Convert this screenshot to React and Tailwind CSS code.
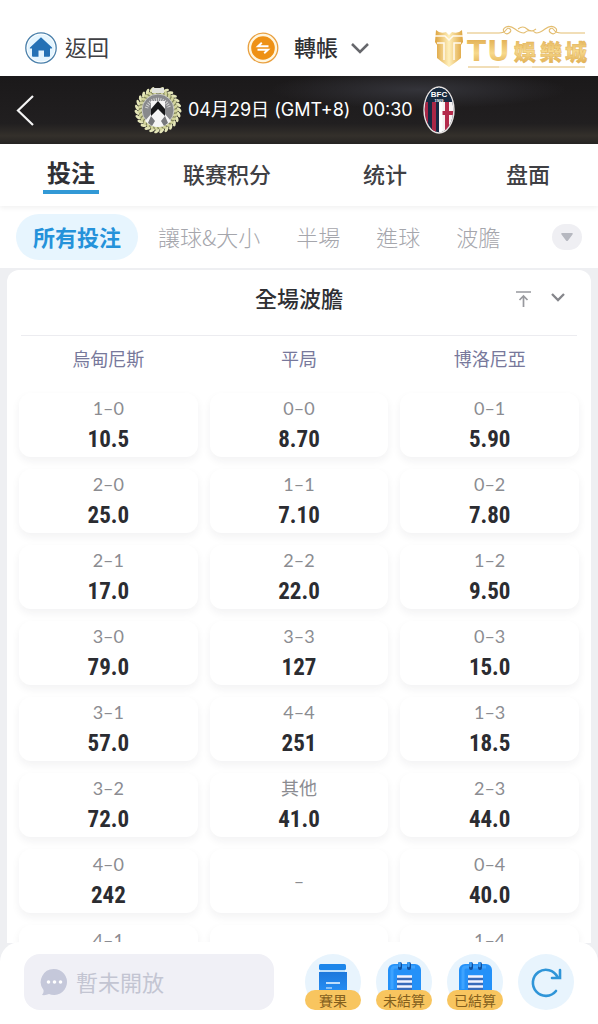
import React from "react";

const rows = [
  [["1–0", "10.5"], ["0–0", "8.70"], ["0–1", "5.90"]],
  [["2–0", "25.0"], ["1–1", "7.10"], ["0–2", "7.80"]],
  [["2–1", "17.0"], ["2–2", "22.0"], ["1–2", "9.50"]],
  [["3–0", "79.0"], ["3–3", "127"], ["0–3", "15.0"]],
  [["3–1", "57.0"], ["4–4", "251"], ["1–3", "18.5"]],
  [["3–2", "72.0"], ["其他", "41.0"], ["2–3", "44.0"]],
  [["4–0", "242"], ["–", ""], ["0–4", "40.0"]],
  [["4–1", "150"], null, ["1–4", "95.0"]],
];

function HomeIcon() {
  return (
    <svg className="size-8" viewBox="0 0 32 32" aria-hidden="true">
      <circle cx="16" cy="16" r="15.2" fill="#fff" stroke="#4a80ab" strokeWidth="1.3" />
      <circle cx="16" cy="16" r="13.6" fill="#e4f5ff" />
      <path d="M16 5.2 27 15.4q.6 1-.5 1.1H25v7.3q0 1-1 1h-5v-6.3h-5.5v6.3H8q-1 0-1-1v-7.3H5.3q-1-.2-.3-1.1z" fill="#2571b5" />
    </svg>
  );
}

function TransferIcon() {
  return (
    <svg className="size-8" viewBox="0 0 32 32" aria-hidden="true">
      <circle cx="16" cy="16" r="14.8" fill="#fff6df" stroke="#e9a040" strokeWidth="1.3" />
      <circle cx="16" cy="16" r="11.8" fill="#ee9115" />
      <path d="M21.500 14.300H11l3.800-3.500M10.500 17.800H21l-3.800 3.500" fill="none" stroke="#fff" strokeWidth="1.900" />
    </svg>
  );
}

function Logo() {
  return (
    <svg className="h-12 w-[156px]" viewBox="0 0 156 48" role="img" aria-label="TU娛樂城">
      <defs>
        <linearGradient id="gold" x1="0" y1="0" x2="0" y2="1">
          <stop offset="0" stopColor="#dda544" />
          <stop offset="0.55" stopColor="#f7d98c" />
          <stop offset="1" stopColor="#dda544" />
        </linearGradient>
        <linearGradient id="shield" x1="0" y1="0" x2="1" y2="0">
          <stop offset="0" stopColor="#dda23c" />
          <stop offset="0.5" stopColor="#fff0bc" />
          <stop offset="1" stopColor="#dda23c" />
        </linearGradient>
      </defs>
      <path d="M2 6q4 4 10 2l3 3 3-3q6 2 10-2l1 12-2 3v13l-5 4-7 5-7-5-5-4V21l-2-3z" fill="url(#shield)" />
      <path d="M1 12h10l4 4 4-4h10M3 19h7v17M27 19h-7v17" fill="none" stroke="#fffaf0" strokeWidth="1.500" />
      <g fill="none" stroke="#e3bd70" strokeWidth="1.100">
        <path d="M33 9h32q5 0 7-3t4-1-1 4-5-1 2-5 9 2 9 4" />
        <path d="M151 9h-24q-5 0-7-3t-4-1 1 4 5-1-2-5-9 2-9 4" />
        <path d="M84 5q5-4 9 0t9 0M90 9q6-5 12 0" />
        <path d="M34 43h31M98 43h53" />
        <path d="M65 43h33" stroke="#f1dcb0" />
      </g>
      <g fontSize="28" fontWeight="700" fill="url(#gold)" fontFamily="DejaVu Sans, sans-serif">
        <text x="33" y="37">T</text>
        <text x="53" y="37">U</text>
      </g>
      <g fontSize="22" fontWeight="900" fill="url(#gold)" stroke="#e3b458" strokeWidth="0.500" fontFamily="Noto Sans CJK TC, sans-serif">
        <text x="80" y="36">娛</text>
        <text x="106" y="36">樂</text>
        <text x="131" y="36">城</text>
      </g>
    </svg>
  );
}

function UdineseCrest() {
  const leaves = Array.from({ length: 26 }, (_, i) => 12 + i * 13.4);
  return (
    <svg className="size-12" viewBox="0 0 48 48" role="img" aria-label="烏甸尼斯">
      <circle cx="24" cy="24" r="20" fill="#83865b" />
      {leaves.map((a) => (
        <g key={a} transform={`rotate(${a} 24 24)`}>
          <ellipse cx="22.800" cy="3" rx="1.500" ry="3" fill="#e4e5b8" transform="rotate(50 23 3)" />
          <ellipse cx="24" cy="6" rx="1.300" ry="2.700" fill="#d2d49c" transform="rotate(-30 24 6)" />
        </g>
      ))}
      <path d="M18 2h12v5H18z" fill="#e1e2dc" />
      <circle cx="24" cy="24" r="16" fill="#88898c" stroke="#d9d9d5" strokeWidth="0.800" />
      <path d="M12.500 22a12 12 0 0 1 23 0" fill="none" stroke="#d4d4d4" strokeWidth="3.500" strokeDasharray="1 1.200" />
      <path d="M17 15h14v13l6 7q-5 6-13 6t-13-6l6-7z" fill="#f5f5f5" />
      <path d="m24 15-7 8v7l7-7 7 7v-7z" fill="#17181a" />
      <path d="m17 30-3 7 4 3 3-5zM31 30l3 7-4 3-3-5z" fill="#77787b" />
    </svg>
  );
}

function BolognaCrest() {
  return (
    <svg className="h-12 w-8" viewBox="0 0 32 48" role="img" aria-label="博洛尼亞">
      <defs>
        <clipPath id="oval">
          <ellipse cx="16" cy="24" rx="14.2" ry="22.2" />
        </clipPath>
      </defs>
      <ellipse cx="16" cy="24" rx="15.7" ry="23.7" fill="#e7e3e2" />
      <g clipPath="url(#oval)">
        <path d="M0 0h32v48H0z" fill="#172843" />
        <path d="M1 16h4v32H1zM9 16h4v32H9z" fill="#a92746" />
        <path d="M16 16h16v32H16z" fill="#f6f2f2" />
        <path d="M22 16h4v32h-4zM17 25h15v4H17z" fill="#b42b4c" />
        <path d="M16.500 16h3v32h-3z" fill="#fff" />
        <path d="M0 16q16-3 32 0V0H0z" fill="#182b40" />
      </g>
      <g fill="#fff" textAnchor="middle" fontWeight="700" fontFamily="Liberation Sans, sans-serif">
        <text x="16" y="11" fontSize="8">BFC</text>
        <text x="16" y="16" fontSize="4">1909</text>
      </g>
    </svg>
  );
}

function ResultIcon() {
  return (
    <svg className="h-9 w-8" viewBox="0 0 32 36" aria-hidden="true">
      <defs>
        <linearGradient id="box" x1="0" y1="0" x2="0" y2="1">
          <stop offset="0" stopColor="#1d78dc" />
          <stop offset="1" stopColor="#2995fb" />
        </linearGradient>
      </defs>
      <rect x="2" y="2" width="27" height="6" rx="1.500" fill="#1d86ea" />
      <path d="M3 8h25v2H3z" fill="#bfe0fb" />
      <path d="M2 10h28v26H2z" fill="url(#box)" />
      <path d="M9 21h14" stroke="#e9f5ff" strokeWidth="1.600" />
      <path d="M9 26h6" stroke="#a8d3fb" strokeWidth="1.500" />
    </svg>
  );
}

function SlipIcon() {
  return (
    <svg className="h-9 w-9" viewBox="0 0 36 36" aria-hidden="true">
      <rect x="2" y="2" width="33" height="36" rx="6" fill="#2491f8" />
      <path d="M6 27V8q0-3 3-3h20" fill="none" stroke="#3da3ff" strokeWidth="3" />
      <path d="M14 2v4M23 2v4" stroke="#104f9e" strokeWidth="4" strokeLinecap="round" />
      <path d="M13.500 1v3M22.500 1v3" stroke="#3b9df5" strokeWidth="2.500" strokeLinecap="round" />
      <path d="M11 14h15v15H11z" fill="#376bbb" />
      <path d="M11 14.500h15M11 19.500h15M11 24.500h15" stroke="#f1f4ff" strokeWidth="2.400" />
    </svg>
  );
}

function RoundButton({ label, children }) {
  return (
    <button className="relative flex h-14 w-14 shrink-0 justify-center rounded-full bg-[#e8f4fd] pt-2">
      {children}
      <span className="absolute inset-x-0 bottom-0 h-5 rounded-full bg-[#f8c55f] text-sm leading-5 text-[#84601d]">{label}</span>
    </button>
  );
}

function Odds({ item }) {
  const empty = !item || !item[1];
  return (
    <button
      disabled={empty}
      className="flex h-16 w-full flex-col items-center justify-center gap-2.5 rounded-xl bg-white shadow-[0_4px_9px_rgba(30,30,50,0.06)]"
    >
      <span className="font-[Lato,'Noto_Sans_CJK_TC',sans-serif] text-lg leading-5 text-[#8b8c91]">{item ? item[0] : ""}</span>
      {!empty && (
        <span className="font-['Liberation_Sans_Narrow','Roboto_Condensed',Roboto,sans-serif] text-[23px] leading-6 font-bold text-[#2b2c31]">{item[1]}</span>
      )}
    </button>
  );
}

export default function App() {
  return (
    <div className="flex h-screen flex-col overflow-hidden bg-[#eeeff2] font-['Noto_Sans_CJK_TC',sans-serif] text-[#3f4044]">
      <header className="grid h-[76px] shrink-0 grid-cols-[247fr_187fr_164fr] items-center bg-white pt-5">
        <a href="#home" className="flex items-center gap-2 pl-[25px] text-[22px] leading-8">
          <HomeIcon />
          <span className="pb-1">返回</span>
        </a>
        <button className="flex items-center text-[22px] leading-8 font-medium text-[#303033]">
          <TransferIcon />
          <span className="ml-[15px] pb-1">轉帳</span>
          <svg className="ml-3 h-6 w-5" viewBox="0 0 20 24" fill="none" stroke="#66676c" strokeWidth="2.500" aria-hidden="true">
            <path d="m2 8 8 8 8-8" />
          </svg>
        </button>
        <Logo />
      </header>

      <section className="flex h-[68px] shrink-0 items-center bg-[radial-gradient(ellipse_at_70%_20%,#34343a_0%,transparent_25%),linear-gradient(180deg,#1b191a_0%,#211f20_70%,#34302b_88%,#262423_100%)] text-white">
        <button aria-label="上一頁" className="flex w-[134px] pl-4">
          <svg className="h-8 w-5" viewBox="0 0 20 32" fill="none" stroke="#f4f4f4" strokeWidth="2.200" aria-hidden="true">
            <path d="M17 2 2 16.500 17 31" />
          </svg>
        </button>
        <UdineseCrest />
        <h1 className="mx-1.5 flex gap-3 font-[Inter,'Noto_Sans_CJK_TC',sans-serif] text-lg leading-6 whitespace-nowrap">
          <span>04月29日 (GMT+8)</span>
          <span>00:30</span>
        </h1>
        <span className="ml-1">
          <BolognaCrest />
        </span>
      </section>

      <nav className="z-10 grid h-[62px] shrink-0 grid-cols-[142fr_170fr_146fr_140fr] items-center justify-items-center bg-white font-['Noto_Sans_CJK_SC',sans-serif] text-[22px] font-medium shadow-[0_2px_5px_rgba(0,0,0,0.06)]">
        <button className="border-b-4 border-[#3299d6] px-1 pb-0.5 text-2xl leading-8 font-bold text-[#2f3034]">投注</button>
        <button className="pb-1">联赛积分</button>
        <button className="pb-1">统计</button>
        <button className="pb-1">盘面</button>
      </nav>

      <div className="flex h-[62px] shrink-0 items-center bg-white px-4 text-[22px] leading-8 font-light whitespace-nowrap text-[#a5a6ac]">
        <button className="h-[46px] rounded-full bg-[#e7f5fe] px-[17px] pb-0.5 font-bold text-[#2592da]">所有投注</button>
        <div className="ml-5 flex gap-9 pb-0.5">
          <button>讓球&amp;大小</button>
          <button>半場</button>
          <button>進球</button>
          <button>波膽</button>
        </div>
        <button aria-label="更多" className="ml-auto flex h-[26px] w-[30px] items-center justify-center rounded-full bg-[#efeff3]">
          <svg className="h-3 w-3.5" viewBox="0 0 14 12" fill="#b6b8c0" aria-hidden="true">
            <path d="M2 2h10q1.500.3.5 1.500L8 9.500q-1 1-2 0L1.500 3.500Q.5 2.300 2 2z" />
          </svg>
        </button>
      </div>

      <main className="min-h-0 flex-1 overflow-y-auto px-[7px] pt-0.5 [scrollbar-width:none]">
        <section className="rounded-t-xl bg-white">
          <div className="mx-3.5 grid h-[66px] grid-cols-[1fr_auto_1fr] items-center border-b border-[#ececf0] pb-2">
            <span />
            <h2 className="pb-1 text-[22px] leading-8 font-medium text-[#2f3034]">全場波膽</h2>
            <div className="flex justify-end gap-4 pr-2">
              <button aria-label="置頂">
                <svg className="h-5 w-5" viewBox="0 0 20 20" fill="none" stroke="#98999e" strokeWidth="1.700" aria-hidden="true">
                  <path d="M3 3h15M10.500 18V7M6.500 11l4-4 4 4" />
                </svg>
              </button>
              <button aria-label="收合">
                <svg className="h-5 w-5" viewBox="0 0 20 20" fill="none" stroke="#85868b" strokeWidth="2.300" aria-hidden="true">
                  <path d="m3 5 6 6 6-6" />
                </svg>
              </button>
            </div>
          </div>
          <table className="w-full table-fixed border-separate border-spacing-3">
            <thead>
              <tr className="text-lg leading-5 text-[#77789b]">
                <th className="h-[33px] p-0 align-top font-normal">烏甸尼斯</th>
                <th className="p-0 align-top font-normal">平局</th>
                <th className="p-0 align-top font-normal">博洛尼亞</th>
              </tr>
            </thead>
            <tbody>
              {rows.map((row, i) => (
                <tr key={i}>
                  {row.map((item, j) => (
                    <td key={j} className="p-0">
                      <Odds item={item} />
                    </td>
                  ))}
                </tr>
              ))}
            </tbody>
          </table>
        </section>
      </main>

      <div className="-mt-4 h-4 shrink-0" />
      <footer className="relative z-10 -mt-px flex h-[82px] shrink-0 items-start gap-[15px] rounded-t-[20px] bg-white px-6 pt-3">
        <label className="mr-4 flex h-14 min-w-0 flex-1 items-center gap-2 rounded-2xl bg-[#f0f0f6] px-4">
          <svg className="size-7 shrink-0" viewBox="0 0 28 28" aria-hidden="true">
            <path d="M14 1a13 13 0 1 1-5 25q-3 1.500-7 1 2-2 1.500-5A13 13 0 0 1 14 1z" fill="#c5c8da" />
            <g fill="#fff">
              <circle cx="8.500" cy="14" r="1.800" />
              <circle cx="14.500" cy="14" r="1.800" />
              <circle cx="20.500" cy="14" r="1.800" />
            </g>
          </svg>
          <input
            type="text"
            disabled
            aria-label="聊天"
            placeholder="暫未開放"
            className="w-full min-w-0 bg-transparent pb-0.5 text-[22px] leading-8 placeholder:text-[#c3c5d2]"
          />
        </label>
        <RoundButton label="賽果">
          <ResultIcon />
        </RoundButton>
        <RoundButton label="未結算">
          <SlipIcon />
        </RoundButton>
        <RoundButton label="已結算">
          <SlipIcon />
        </RoundButton>
        <button aria-label="重新整理" className="flex size-14 shrink-0 items-center justify-center rounded-full bg-[#e8f4fd]">
          <svg className="size-8" viewBox="0 0 32 32" fill="none" stroke="#2f95d8" strokeWidth="2.600" strokeLinecap="round" aria-hidden="true">
            <path d="M26 25A13 13 0 1 1 27.500 11M30 4v8h-8" />
          </svg>
        </button>
      </footer>
    </div>
  );
}
